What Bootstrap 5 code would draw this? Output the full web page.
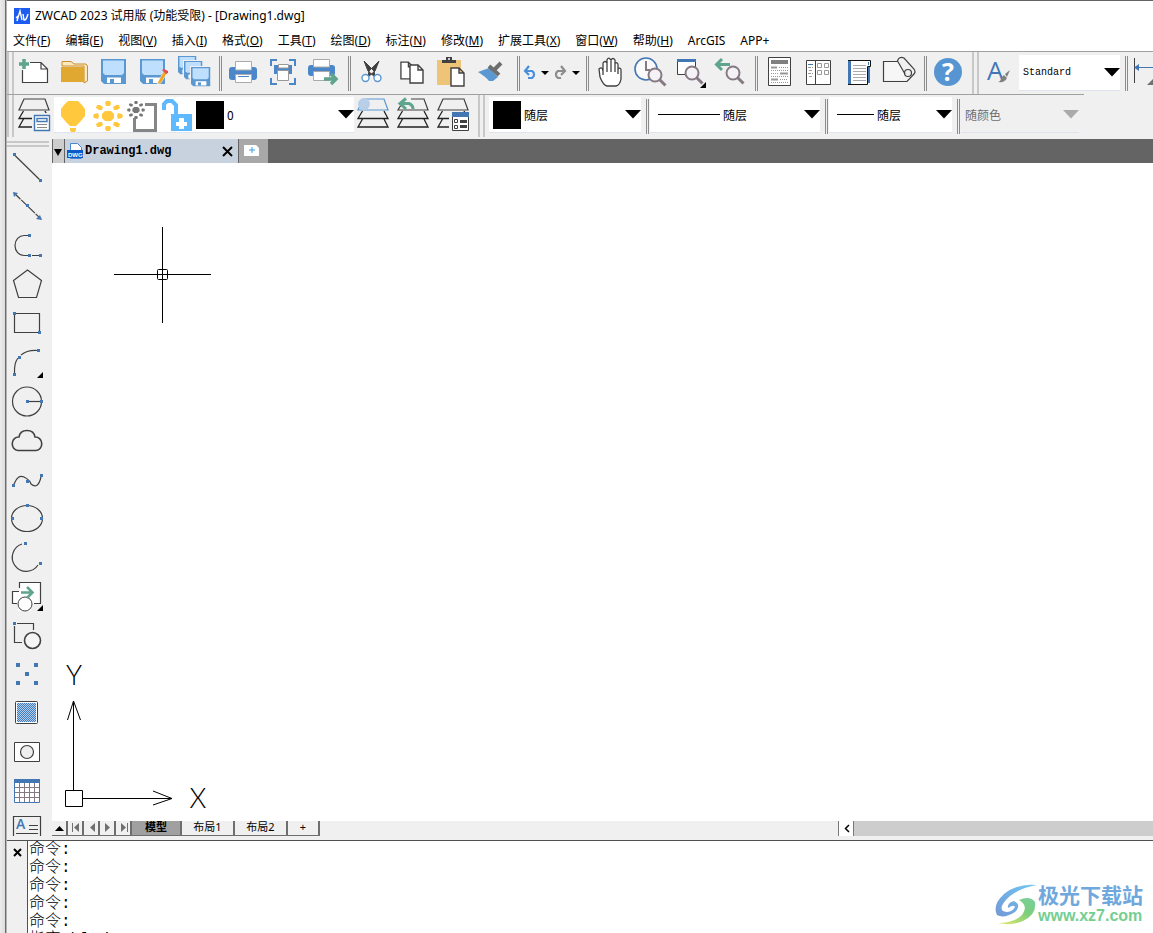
<!DOCTYPE html>
<html lang="zh-CN">
<head>
<meta charset="utf-8">
<meta name="viewport" content="width=device-width, initial-scale=1">
<title>ZWCAD 2023 试用版</title>
<link rel="stylesheet" href="https://cdn.jsdelivr.net/npm/bootstrap@5.3.0/dist/css/bootstrap.min.css">
<style>
body{font:12px/18px "Noto Sans","Noto Sans CJK SC",sans-serif;color:#000;background:#fff}
.gutter{width:7px;background:linear-gradient(90deg,#ececec,#dcdcdc 5px,#6c6c6c 5px);border-right:1px solid #b4b4b4}
.app{border-top:1px solid #646464;min-width:0}
.caption-row{height:30px;padding-left:6px;gap:4px;flex:none}
.menu-row{height:20px;padding-left:6px;gap:15px;white-space:nowrap;flex:none}
.menu-row a{color:#000;text-decoration:none;line-height:20px}
.strip{background:#f0f0f0;border-top:1px solid #a0a0a0;height:43px;overflow:hidden;flex:none}
.strip.second{height:44px;border-top:0}
.second-line{height:1px;background:linear-gradient(90deg,#a0a0a0 94%,#f0f0f0 94%)}
.btn{--bs-btn-padding-x:0;--bs-btn-padding-y:0;--bs-btn-border-width:0;--bs-btn-border-radius:0;--bs-btn-font-size:12px;line-height:0;flex:none}
.btn svg{display:block}
.grip{width:7px;height:42px;border:solid #c8c8c8;border-width:0 2px;flex:none}
.split{width:9px;height:35px;flex:none;padding-left:5px}
.split::before{content:"";display:block;width:3px;height:35px;border:solid #8c8c8c;border-width:0 1px}
.field{background:#fff;height:36px;border-bottom:1px solid #e0e4ee;flex:none;overflow:hidden}
.second .field{margin-top:2px}
.form-select{font:12px/18px "Noto Sans CJK SC",sans-serif;color:#000;border:0;border-radius:0;padding:0 16px 0 0;height:35px;min-width:0;flex:1;--bs-form-select-bg-img:url("data:image/svg+xml,%3Csvg xmlns='http://www.w3.org/2000/svg' viewBox='0 0 16 9'%3E%3Cpath d='M0 0H16L8 8.500Z'/%3E%3C/svg%3E");background-size:16px 9px;background-position:right 0 center;background-color:#fff;background-image:var(--bs-form-select-bg-img)}
.form-select:disabled{color:#6d6d6d;opacity:1;background-color:#f0f0f0;--bs-form-select-bg-img:url("data:image/svg+xml,%3Csvg xmlns='http://www.w3.org/2000/svg' viewBox='0 0 16 9'%3E%3Cpath fill='%23aaa' d='M0 0H16L8 8.500Z'/%3E%3C/svg%3E")}
.form-select.fixed-face{font-family:"Liberation Mono",monospace;font-size:10px}
.swatch{width:28px;height:28px;background:#000;flex:none;margin-right:3px}
.rule{height:1px;background:#000;flex:none;margin-right:3px}
.toolbox{width:45px;background:#f0f0f0;overflow:hidden;flex:none;padding-top:2px}
.toolbox .handle{height:6px;width:42px;border:solid #c8c8c8;border-width:2px 0;margin-bottom:1px;flex:none}
.toolbox .btn{height:39px}
.doc-tabs{background:#646464;height:24px;flex:none}
.doc-tab{background:#c8d2de;width:175px;padding:0 5px 0 2px;border-left:1px solid #646464;border-right:1px solid #646464;font:bold 12px/24px "Liberation Mono",monospace}
.drop-tab{width:12px;background:#cdcdcd;border-left:1px solid #646464}
.add-tab{width:29px;background:#a8a8a8}
.canvas{min-height:0}
.crosshair{left:62px;top:64px}
.ucs{overflow:visible}
.ucs text{font:300 27px "Lato","Open Sans",sans-serif}
.layout-row{height:15px;flex:none;overflow:hidden;background:#f0f0f0}
.layout-row .btn{line-height:12px;height:15px;padding-bottom:2px;border-right:2px solid #6e6e6e;border-bottom:1px solid #6e6e6e;font-size:11px;color:#000}
.layout-row .nav-btn{width:16px}
.layout-row .lay{width:53px}
.layout-row .current{width:50px;font-weight:700;background:#a0a0a0}
.tabs-part{flex:5}
.scroll-part{flex:2;background:#cdcdce}
.scroll-part .btn{width:16px;background:#fff;border:solid #787878;border-width:0 1px}
.below{height:4px;background:#f0f0f0;flex:none}
.command{height:93px;border-top:1px solid #505050;flex:none;overflow:hidden}
.command .closer{width:21px;background:#f0f0f0;border-right:1px solid #505050;padding-top:3px}
.history{font:300 16px/18px "Liberation Mono","Noto Sans CJK SC",monospace;padding-left:1px;margin:0;overflow:hidden}
.watermark{right:10px;bottom:8px}
.watermark .cn{font:bold 21px/24px "Noto Sans CJK SC",sans-serif;color:#6fa8dc}
.watermark .url{font:bold 16px/19px "Liberation Sans",sans-serif;color:#73cf91}
.ln{fill:none;stroke:#404040;stroke-width:1.200}
.dot{fill:#4277b4}
</style>
</head>
<body class="vh-100 overflow-hidden">
<svg width="0" height="0" class="position-absolute" aria-hidden="true">
<symbol id="disk" viewBox="0 0 26 26"><path fill="#5b97d1" d="M1 0H25V25H3L0 22V0Z"/><path fill="#bfdfff" d="M2 1.500H23V14L21 16H4L2 14Z"/><path fill="#fff" d="M6 18.500H20V24H6Z"/><path fill="#5b97d1" d="M9 20H13V24H9Z"/></symbol>
<symbol id="glass" viewBox="0 0 20 20"><circle cx="8" cy="8" r="6.500" fill="#f5f2f5" stroke="#857983" stroke-width="2"/><path d="M12.500 12.500L18.500 18.500" stroke="#857983" stroke-width="3"/></symbol>
<symbol id="rays" viewBox="0 0 30 30"><path d="M12 10h6l3 3v4l-3 3h-6l-3-3v-4z"/><path d="M13 0h4l1 2-1 3h-4l-1-3zM13 25h4l1 2-1 3h-4l-1-3zM0 15l1-2 4-1 1 3-1 3-4-1zM24 15l1-3 4 1 1 2-1 2-4 1zM4 4h3l3 2-1 3H6L3 7zM26 4h-3l-3 2 1 3h3l3-2zM4 26h3l3-2-1-3H6l-3 2zM26 26h-3l-3-2 1-3h3l3 2z"/></symbol>
<symbol id="sheets" viewBox="0 0 40 40"><path d="M9.500 16L5 23.500H35L31 16M9.500 24L5 32H35L31 24" fill="none" stroke="#222" stroke-width="1.300"/></symbol>
<symbol id="leaf" viewBox="0 0 15 20"><path d="M1 1H9L14 6V19H1ZM9 1V6H14" fill="#fff" stroke="#404040" stroke-width="1.400"/></symbol>
<pattern id="mesh" width="2" height="2" patternUnits="userSpaceOnUse"><path fill="#b4cdea" d="M0 0H2V2H0Z"/><path fill="#3f7cc0" d="M0 0h1v1H0zM1 1h1v1H1z"/></pattern>
</svg>
<div class="d-flex h-100">
<div class="gutter flex-shrink-0"></div>
<div class="app d-flex flex-column flex-grow-1">
<header class="caption-row d-flex align-items-center">
<svg width="18" height="16" viewBox="0 0 18 16"><path fill="#1d5cf0" d="M1 0H17V16H1Z"/><path fill="none" stroke="#fff" stroke-width="1.400" d="M4 13L7 3L9 12M10 6L11 12Q13 13 15 6M5 8L3 10"/></svg>
<span>ZWCAD 2023 试用版 (功能受限) - [Drawing1.dwg]</span>
</header>
<nav class="menu-row d-flex" aria-label="菜单">
<a href="#">文件(<u>F</u>)</a><a href="#">编辑(<u>E</u>)</a><a href="#">视图(<u>V</u>)</a><a href="#">插入(<u>I</u>)</a><a href="#">格式(<u>O</u>)</a><a href="#">工具(<u>T</u>)</a><a href="#">绘图(<u>D</u>)</a><a href="#">标注(<u>N</u>)</a><a href="#">修改(<u>M</u>)</a><a href="#">扩展工具(<u>X</u>)</a><a href="#">窗口(<u>W</u>)</a><a href="#">帮助(<u>H</u>)</a><a href="#">ArcGIS</a><a href="#">APP+</a>
</nav>
<div class="strip d-flex align-items-start" role="toolbar" aria-label="标准">
<div class="grip"></div>
<button class="btn" type="button" aria-label="新建"><svg width="40" height="40"><path d="M8 18V30.500H34V17L27 10H16" fill="#fff"/><path d="M8.500 18V30.500H33.500V17L27 10.500H16M27 10.500V17H33.500" class="ln"/><path d="M10 7V17M5 12H15" stroke="#5fa48c" stroke-width="3.500"/></svg></button>
<button class="btn" type="button" aria-label="打开"><svg width="40" height="40"><path d="M8 14V9.500H17L20 12H32L33.500 14V29L30 31V14Z" fill="#fde9c0" stroke="#c98e2b"/><path fill="#e0a830" d="M7 15H30V30H7Z"/></svg></button>
<button class="btn" type="button" aria-label="保存"><svg width="40" height="40"><use href="#disk" x="7" y="7" width="26" height="26"/></svg></button>
<button class="btn" type="button" aria-label="另存为"><svg width="40" height="40"><use href="#disk" x="6" y="7" width="26" height="26"/><path d="M25 28L30 19L33 21L27 31L23 32Z" fill="#f5a31c" stroke="#fff" stroke-width=".5"/><path fill="#e84d4d" d="M28 18L30 17L34 19V21L32 22Z"/></svg></button>
<button class="btn" type="button" aria-label="全部保存"><svg width="40" height="40"><use href="#disk" x="4" y="4" width="19" height="19"/><path fill="#f0f0f0" d="M9 8H30V30H9Z"/><use href="#disk" x="10" y="9" width="19" height="19"/><path fill="#f0f0f0" d="M16 14H37V36H16Z"/><use href="#disk" x="17" y="15" width="20" height="20"/></svg></button>
<div class="split align-self-center"></div>
<button class="btn" type="button" aria-label="打印"><svg width="40" height="40"><rect x="6" y="15" width="28" height="13" rx="3" fill="#4a86c8"/><path d="M12.500 9.500H28.500V18H12.500ZM12.500 22.500H28.500V30.500H12.500Z" fill="#fff" stroke="#aaa"/><path stroke="#4a86c8" d="M15 24.500H26"/></svg></button>
<button class="btn" type="button" aria-label="打印预览"><svg width="40" height="40"><path d="M8 14V8H14M26 8H32V14M8 26V32H14M26 32H32V26" fill="none" stroke="#4a86c8" stroke-width="2"/><path fill="#4a86c8" d="M11 13H29V22H11Z"/><path d="M15.500 12.500H25.500V16H15.500ZM14.500 18.500H25.500V28.500H14.500Z" fill="#fff" stroke="#999"/></svg></button>
<button class="btn" type="button" aria-label="发布"><svg width="40" height="40"><rect x="5" y="13" width="27" height="11" rx="3" fill="#4a86c8"/><path d="M10.500 7.500H26.500V15H10.500ZM10.500 19.500H26.500V28.500H10.500Z" fill="#fff" stroke="#aaa"/><path d="M21 27H33M28 22L33 27L28 32" fill="none" stroke="#5fa48c" stroke-width="3.500"/></svg></button>
<div class="split align-self-center"></div>
<button class="btn" type="button" aria-label="剪切"><svg width="40" height="40"><path d="M12 9L16 19L23 25L22 19ZM27 9L23 19L16 25L17 19Z" fill="#404040" stroke="#404040"/><g fill="#fff" stroke="#5b97d1" stroke-width="1.400"><circle cx="13.500" cy="26" r="3.500"/><circle cx="25.500" cy="26" r="3.500"/></g></svg></button>
<button class="btn" type="button" aria-label="复制"><svg width="40" height="40"><use href="#leaf" x="8" y="8" width="14" height="21"/><use href="#leaf" x="17" y="12" width="15" height="20"/></svg></button>
<button class="btn" type="button" aria-label="粘贴"><svg width="40" height="40"><path fill="#eec478" d="M5 8H29V33H5Z"/><path fill="#404040" d="M10 11V8H14V5H20V8H24V11Z"/><circle cx="17" cy="7" r="1" fill="#fff"/><use href="#leaf" x="18" y="15" width="15" height="20"/></svg></button>
<button class="btn" type="button" aria-label="特性匹配"><svg width="40" height="40"><path d="M6 20L17 16L26 25L21 29H17Q14 25 6 20Z" fill="#5b97d1"/><path d="M17 14L27 23M22 18L29 11" stroke="#6e6e6e" stroke-width="4"/></svg></button>
<div class="split align-self-center"></div>
<button class="btn" type="button" aria-label="撤销"><svg width="19" height="40"><path d="M4 19H11A4 4 0 0 1 11 26H7M8 14L4 19L8 23" fill="none" stroke="#4a8fdc" stroke-width="2.200"/></svg></button>
<button class="btn" type="button" aria-label="撤销列表"><svg width="12" height="40"><path d="M1 19H9L5 23Z"/></svg></button>
<button class="btn" type="button" aria-label="重做"><svg width="17" height="40"><path d="M13 19H6A4 4 0 0 0 6 26H9M9 14L13 19L9 23" fill="none" stroke="#8c8c8c" stroke-width="2.200"/></svg></button>
<button class="btn" type="button" aria-label="重做列表"><svg width="12" height="40"><path d="M3 19H11L7 23Z"/></svg></button>
<div class="split align-self-center"></div>
<button class="btn" type="button" aria-label="平移"><svg width="40" height="40"><path d="M13 23V11Q15 8 17 11V8Q18 5 20 7L21 8Q23 5 25 8V11Q28 10 28 13V17Q31 15 31 18V27Q30 33 26 34H17Q13 33 10 25L9 17Q12 14 13 19M17 10V20M21 8V20M25 11V20M28 15V22" fill="#fff" stroke="#404040" stroke-width="1.300"/></svg></button>
<button class="btn" type="button" aria-label="实时缩放"><svg width="40" height="40"><circle cx="16" cy="17" r="11" fill="#fafafa" stroke="#4277b4" stroke-width="1.600"/><path d="M16 9V18H20" fill="none" stroke="#857983" stroke-width="2"/><use href="#glass" x="17" y="15" width="20" height="20"/></svg></button>
<button class="btn" type="button" aria-label="窗口缩放"><svg width="40" height="40"><path d="M7.500 8.500H25.500V22.500H7.500Z" fill="#fff" stroke="#404040"/><path fill="#4277b4" d="M7 7H26V10H7Z"/><use href="#glass" x="14" y="13" width="20" height="20"/><path d="M30 36H36V30Z"/></svg></button>
<button class="btn" type="button" aria-label="上一个缩放"><svg width="40" height="40"><path d="M7 12.500H20M12 7L6.500 12.500L12 18" fill="none" stroke="#5fa48c" stroke-width="3"/><use href="#glass" x="15" y="13" width="20" height="20"/></svg></button>
<div class="split align-self-center"></div>
<button class="btn" type="button" aria-label="特性"><svg width="40" height="40"><path d="M9.500 5.500H31.500V33.500H9.500Z" fill="#fff" stroke="#404040"/><path fill="#808080" d="M12 8H29V12H12Z"/><g stroke="#999"><path stroke-width="2" d="M12 15.500H18M21 21.500H29M12 27.500H19"/><path stroke-dasharray="1" d="M20 15.500H29M12 18.500H29M12 21.500H19M12 24.500H29M21 27.500H29M12 30.500H29"/></g></svg></button>
<button class="btn" type="button" aria-label="设计中心"><svg width="40" height="40"><path d="M7.500 8.500H31.500V32.500H7.500ZM16.500 8V32" fill="#fff" stroke="#404040"/><path stroke="#4277b4" d="M9 12.500H14"/><path stroke="#999" stroke-dasharray="3 1" d="M9 15.500H14M10 18.500H14M9 21.500H14M10 24.500H14"/><path fill="none" stroke="#999" d="M18.500 11.500H22.500V15.500H18.500ZM25.500 11.500H29.500V15.500H25.500ZM18.500 18.500H22.500V22.500H18.500ZM25.500 18.500H29.500V22.500H25.500Z"/></svg></button>
<button class="btn" type="button" aria-label="工具选项板"><svg width="40" height="40"><path fill="#4277b4" d="M9 8H12V33H9ZM29 15H31V31H29Z"/><path d="M12 8.500H31.500V14.500H28.500V32.500H12Z" fill="#fff"/><path d="M9 8.500H31.500V14.500H28.500V32.500H9" fill="none" stroke="#111"/><path stroke="#aaa" d="M14 13.500H27M14 16.500H27M14 19.500H27M14 22.500H27M14 25.500H27M14 28.500H27"/><path stroke="#4277b4" d="M29.500 10V13"/></svg></button>
<button class="btn" type="button" aria-label="图纸集"><svg width="40" height="40"><path d="M4.500 9.500H19L27 28H4.500Z" fill="#f6f6f6"/><path d="M19 9.500H4.500V29.500H28L35 22Q37 20 35 17L25 6Q20 4 18.500 9L26 22" class="ln"/><circle cx="29" cy="21" r="3.500" class="ln"/></svg></button>
<div class="split align-self-center"></div>
<button class="btn" type="button" aria-label="帮助"><svg width="40" height="40"><circle cx="20" cy="20" r="14" fill="#5795d2"/><text x="20" y="29" text-anchor="middle" fill="#fff" font-family="Open Sans, sans-serif" font-weight="700" font-size="25">?</text></svg></button>
<div class="d-flex ps-1"><div class="grip"></div></div>
<button class="btn" type="button" aria-label="文字样式"><svg width="40" height="40"><text x="8" y="28" fill="#4277b4" font-family="Open Sans, sans-serif" font-size="26">A</text><path d="M19 30Q22 29 22 26L25 23L28 26Q26 31 19 30ZM26 22L31 18L28 25Z" fill="#808080"/></svg></button>
<div class="field d-flex align-self-center" style="width:101px"><select class="form-select fixed-face ps-1" aria-label="文字样式"><option>Standard</option></select></div>
<div class="split align-self-center"></div>
<button class="btn" type="button" aria-label="标注"><svg width="40" height="40"><path stroke="#404040" d="M5.500 6V31"/><path stroke="#4277b4" d="M7 15.500H40"/><path fill="#4277b4" d="M5 15.500L10 12V19Z"/><path d="M18 33H24V27Z" fill="#707070"/></svg></button>
</div>
<div class="second-line flex-shrink-0"></div>
<div class="strip second d-flex align-items-start" role="toolbar" aria-label="图层">
<div class="grip"></div>
<button class="btn" type="button" aria-label="图层特性"><svg width="40" height="40"><path d="M10 4H31L35 15H5Z" class="ln"/><use href="#sheets" width="40" height="40"/><path fill="#fff" stroke="#f0f0f0" stroke-width="2" d="M19 19H37V36H19Z"/><path fill="#fff" stroke="#4277b4" stroke-width="1.400" d="M20.500 20.500H35.500V35.500H20.500ZM23 23.500H33V26.500H23Z"/><path stroke="#888" d="M23 29.500H33M23 32.500H33"/></svg></button>
<div class="field d-flex align-items-center" style="width:300px">
<button class="btn ms-1" type="button" aria-label="开/关图层"><svg width="34" height="36" fill="#ffc83d"><path d="M10 4H20L24 8L27 12V19L22 25L18 29H12L8 25L3 19V12L6 8Z"/><path d="M12 31H18V33L17 35H13L12 33Z"/></svg></button>
<button class="btn" type="button" aria-label="冻结图层"><svg width="35" height="36" fill="#ffc83d"><use href="#rays" x="1" y="4" width="30" height="30"/></svg></button>
<button class="btn" type="button" aria-label="视口冻结"><svg width="35" height="36"><path d="M18 7.500H28.500V33.500H7.500V21" fill="none" stroke="#868686" stroke-width="3"/><use href="#rays" x="0" y="4" width="18" height="18" fill="#777"/></svg></button>
<button class="btn" type="button" aria-label="锁定图层"><svg width="34" height="36" fill="#5fb9ff"><path d="M9 17H30V34H9Z"/><path fill="none" stroke="#5fb9ff" stroke-width="4" d="M2 13V7L5 4H10L14 8V18"/><path fill="#fff" d="M17 21H22V25H25V29H22V32H17V29H14V25H17Z"/></svg></button>
<span class="swatch"></span><select class="form-select" aria-label="图层"><option>0</option></select></div>
<button class="btn" type="button" aria-label="图层置为当前"><svg width="40" height="40"><path d="M9 4H30L34 15H4Z" class="ln" style="stroke:#5b97d1"/><use href="#sheets" x="-1" width="40" height="40"/><circle cx="10" cy="9" r="6" fill="#b9cfe9"/></svg></button>
<button class="btn" type="button" aria-label="上一图层"><svg width="40" height="40"><path d="M17 4H30L34 15H4L7 10" class="ln"/><use href="#sheets" x="-1" width="40" height="40"/><path d="M6 8.500H15Q19 10 19 14M12 3.500L6 8.500L12 14" fill="none" stroke="#5fa48c" stroke-width="3"/></svg></button>
<button class="btn" type="button" aria-label="图层状态"><svg width="40" height="40"><path d="M9 4H30L34 15H4Z" class="ln"/><use href="#sheets" x="-1" width="40" height="40"/><path fill="#f0f0f0" d="M15 17H36V37H15Z"/><path fill="#fff" stroke="#404040" d="M18.500 18.500H34.500V35.500H18.500Z"/><path fill="#4277b4" d="M18 17H35V22H18Z"/><path d="M20.500 24.500H23.500V27.500H20.500ZM20.500 30.500H23.500V33.500H20.500Z" fill="none" stroke="#404040"/><path stroke="#404040" stroke-width="3" d="M26 26.500H33M26 31.500H33"/></svg></button>
<div class="d-flex ps-1"><div class="grip me-1"></div></div>
<div class="field d-flex align-items-center ps-1" style="width:152px"><span class="swatch"></span><select class="form-select" aria-label="颜色"><option>随层</option></select></div>
<div class="split mt-1"></div>
<div class="field d-flex align-items-center ps-2" style="width:170px"><span class="rule" style="width:62px"></span><select class="form-select" aria-label="线型"><option>随层</option></select></div>
<div class="split mt-1"></div>
<div class="field d-flex align-items-center ps-2" style="width:123px"><span class="rule" style="width:37px"></span><select class="form-select" aria-label="线宽"><option>随层</option></select></div>
<div class="split mt-1"></div>
<div class="field d-flex" style="width:118px;background:#f0f0f0"><select class="form-select ps-1" aria-label="打印样式" disabled><option>随颜色</option></select></div>
</div>
<div class="d-flex flex-grow-1" style="min-height:0">
<aside class="toolbox d-flex flex-column" role="toolbar" aria-label="绘图">
<div class="handle"></div>
<button class="btn" type="button" aria-label="直线"><svg width="45" height="39"><path class="ln" d="M7.500 7L33.500 32.500"/><path class="dot" d="M6 5h3v3H6zM32 31h3v3h-3z"/></svg></button>
<button class="btn" type="button" aria-label="构造线"><svg width="45" height="39"><path class="ln" stroke-dasharray="9 1" d="M7 6L34 32"/><path class="dot" d="M6 5l5 1-4 4zM35 33l-6-1 4-4zM19 17h3v3h-3z"/></svg></button>
<button class="btn" type="button" aria-label="多段线"><svg width="45" height="39"><path class="ln" d="M21 9.500H17A9 10 0 0 0 17 29.500H21M25 29.500H32"/><path class="dot" d="M21 8h3v3h-3zM21 28h3v3h-3zM32 28h3v3h-3z"/></svg></button>
<button class="btn" type="button" aria-label="正多边形"><svg width="45" height="39"><path class="ln" d="M20.500 5L34.500 15.500L29.500 32.500H11.500L6.500 15.500Z"/></svg></button>
<button class="btn" type="button" aria-label="矩形"><svg width="45" height="39"><path class="ln" d="M9 9.500H32.500V27M31 28.500H7.500V11"/><path class="dot" d="M6 8h3v3H6zM31 27h3v3h-3z"/></svg></button>
<button class="btn" type="button" aria-label="圆弧"><svg width="45" height="39"><path class="ln" d="M7.500 30Q7 20 11 15M14 12Q20 7 30 7.500"/><path class="dot" d="M6 30h3v3H6zM11 13h3v3h-3zM30 6h3v3h-3z"/><path d="M30 35H36V29Z"/></svg></button>
<button class="btn" type="button" aria-label="圆"><svg width="45" height="39"><circle class="ln" cx="20" cy="19.500" r="14.500"/><path class="ln" d="M22 19.500H34"/><path class="dot" d="M19 18h3v3h-3zM33 18h3v3h-3z"/></svg></button>
<button class="btn" type="button" aria-label="修订云线"><svg width="45" height="39"><path class="ln" style="stroke-width:1.600" d="M11 29.500A6 6.500 0 0 1 12 16Q13 9.500 20 9.500T28 16A6 6.500 0 0 1 29 29.500Z"/></svg></button>
<button class="btn" type="button" aria-label="样条曲线"><svg width="45" height="39"><path class="ln" d="M7 24Q11 14 17 17T24 24Q31 30 34 17"/><path class="dot" d="M5 24h3v3H5zM19 20h3v3h-3zM33 14h3v3h-3z"/></svg></button>
<button class="btn" type="button" aria-label="椭圆"><svg width="45" height="39"><ellipse class="ln" cx="20" cy="19.500" rx="15.500" ry="13"/><path class="dot" d="M19 5h3v3h-3zM4 18h3v3H4zM33 18h3v3h-3z"/></svg></button>
<button class="btn" type="button" aria-label="椭圆弧"><svg width="45" height="39"><path class="ln" d="M15 6A14 14 0 1 0 31 27"/><path class="dot" d="M17 4h3v3h-3zM32 24h3v3h-3z"/></svg></button>
<button class="btn" type="button" aria-label="插入块"><svg width="45" height="39"><path d="M5.500 14.500H12.500V5.500H33.500V26.500H24V34H11V26.500H5.500Z" fill="#fff"/><path class="ln" d="M10 26.500H5.500V14.500H12M12.500 11V5.500H33.500V26.500H27"/><circle cx="18" cy="27" r="7" fill="#fff" stroke="#404040"/><path d="M14 15.500H26M20 10L25.500 15.500L20 21" fill="none" stroke="#5fa48c" stroke-width="2.500"/><path d="M30 34H36V28Z"/></svg></button>
<button class="btn" type="button" aria-label="创建块"><svg width="45" height="39"><path class="ln" d="M10 7.500H26.500V14M7.500 10V26.500H15"/><path class="dot" d="M6 6h3v3H6z"/><circle cx="25.500" cy="24.500" r="8" fill="#f5f5f5" stroke="#404040" stroke-width="1.600"/></svg></button>
<button class="btn" type="button" aria-label="点"><svg width="45" height="39"><path class="dot" d="M9 8h4v4H9zM27 8h4v4h-4zM18 17h4v4h-4zM9 26h4v4H9zM27 26h4v4h-4z"/></svg></button>
<button class="btn" type="button" aria-label="填充"><svg width="45" height="39"><rect x="8.500" y="7.500" width="22" height="22" rx="1" fill="#fff" stroke="#404040"/><path fill="url(#mesh)" d="M10 9H29V28H10Z"/></svg></button>
<button class="btn" type="button" aria-label="面域"><svg width="45" height="39"><path fill="#fff" stroke="#404040" d="M7.500 9.500H32.500V28.500H7.500Z"/><circle cx="20" cy="19" r="6.500" fill="#eee" stroke="#404040" stroke-width="1.200"/></svg></button>
<button class="btn" type="button" aria-label="表格"><svg width="45" height="39"><path fill="#fff" stroke="#4277b4" d="M7.500 7.500H32.500V30.500H7.500Z"/><path stroke="#857983" d="M12.500 11V30M17.500 11V30M22.500 11V30M27.500 11V30M8 15.500H32M8 20.500H32M8 25.500H32"/><path fill="#4277b4" d="M7 7H33V11H7Z"/></svg></button>
<button class="btn" type="button" aria-label="多行文字"><svg width="45" height="39"><path class="ln" d="M6.500 25V5.500H33.500V25M22 14.500H31M22 18.500H31M9 22.500H31"/><text x="9" y="18" fill="#4277b4" font-family="Open Sans, sans-serif" font-size="14" font-weight="600">A</text></svg></button>
</aside>
<main class="d-flex flex-column flex-grow-1" style="min-width:0">
<div class="doc-tabs d-flex">
<button class="btn drop-tab" type="button" aria-label="文档列表"><svg width="10" height="24"><path d="M1 10H9L5 17Z"/></svg></button>
<div class="doc-tab d-flex align-items-center"><svg width="18" height="24"><path d="M3.500 4.500H10.500L14.500 8.500V19.500H3.500Z" fill="#fff" stroke="#4a86d8"/><path fill="#0a5ac8" d="M0 11H16V19H0Z"/><text x="1" y="18" fill="#fff" font-family="Liberation Sans, sans-serif" font-weight="700" font-size="6">DWG</text></svg><span class="me-auto">Drawing1.dwg</span><button class="btn" type="button" aria-label="关闭"><svg width="11" height="11"><path d="M1 1L10 10M10 1L1 10" stroke="#000" stroke-width="2"/></svg></button></div>
<button class="btn add-tab" type="button" aria-label="新建图形"><svg width="29" height="24"><path fill="#fff" d="M5 6H17L20 9V17H5Z"/><path d="M13 8V14M10 11H16" stroke="#3aa0e8"/></svg></button>
</div>
<div class="canvas position-relative flex-grow-1 overflow-hidden">
<svg class="crosshair position-absolute" width="97" height="97" fill="none" stroke="#000"><path d="M0 47.500H97M48.500 0V96"/><rect x="43.500" y="42.500" width="10" height="10" rx="1"/></svg>
<svg class="ucs position-absolute bottom-0 start-0" width="160" height="161"><g fill="none" stroke="#000"><path d="M13.500 130.500H30.500V146.500H13.500ZM21.500 130V41M15.500 60L21.500 41L28.500 60M31 138.500H120M101 131L120 138.500L101 145"/></g><text x="22" y="25" text-anchor="middle">Y</text><text x="146" y="148" text-anchor="middle">X</text></svg>
</div>
<div class="layout-row d-flex">
<div class="tabs-part d-flex">
<button class="btn nav-btn" type="button" aria-label="展开"><svg width="14" height="14"><path d="M3 10H12L7.500 5Z"/></svg></button>
<button class="btn nav-btn" type="button" aria-label="首个"><svg width="14" height="14" fill="#707070"><path d="M4 2h1v9H4zM11 2v9L6 6.500z"/></svg></button>
<button class="btn nav-btn" type="button" aria-label="上一个"><svg width="14" height="14" fill="#707070"><path d="M11 2v9L6 6.500z"/></svg></button>
<button class="btn nav-btn" type="button" aria-label="下一个"><svg width="14" height="14" fill="#707070"><path d="M5 2v9L10 6.500z"/></svg></button>
<button class="btn nav-btn" type="button" aria-label="末个"><svg width="14" height="14" fill="#707070"><path d="M11 2h1v9h-1zM5 2v9L10 6.500z"/></svg></button>
<button class="btn current" type="button">模型</button><button class="btn lay" type="button">布局1</button><button class="btn lay" type="button">布局2</button><button class="btn" type="button" style="width:32px">+</button>
</div>
<div class="scroll-part d-flex"><button class="btn" type="button" aria-label="向左滚动"><svg width="14" height="15"><path d="M10 4L6.500 7.500L10 11" fill="none" stroke="#000" stroke-width="1.500"/></svg></button></div>
</div>
<div class="below"></div>
</main>
</div>
<section class="command d-flex position-relative" aria-label="命令行">
<div class="closer"><button class="btn ms-1" type="button" aria-label="关闭命令行"><svg width="14" height="12"><path d="M3 1L10 8M10 1L3 8" stroke="#000" stroke-width="2"/></svg></button></div>
<pre class="history">命令:
命令:
命令:
命令:
命令:
指定 bl d</pre>
<div class="watermark position-absolute d-flex align-items-center">
<svg width="44" height="42" viewBox="0 0 44 42"><defs><linearGradient id="sky" x1="0" y1="1" x2="1" y2="0"><stop stop-color="#7398d6"/><stop offset="1" stop-color="#6fc8f2"/></linearGradient><linearGradient id="lime" x1="0" y1="1" x2="1" y2="0"><stop stop-color="#e9e96a"/><stop offset=".6" stop-color="#7bce7c"/><stop offset="1" stop-color="#79cfa0"/></linearGradient></defs><path fill="url(#sky)" d="M43 2Q24 0 10 11Q-2 22 3 32Q10 36 21 29Q28 22 20 18Q13 20 14 25Q20 21 21 24Q17 31 9 28Q4 24 16 13Q26 5 43 2Z"/><path fill="url(#lime)" d="M25 17Q36 12 41 19Q43 31 29 38Q17 43 4 40Q20 40 28 32Q35 23 25 17Z"/></svg>
<div><div class="cn">极光下载站</div><div class="url">www.xz7.com</div></div>
</div>
</section>
</div>
</div>
<script src="https://cdn.jsdelivr.net/npm/bootstrap@5.3.0/dist/js/bootstrap.bundle.min.js"></script>
</body>
</html>
